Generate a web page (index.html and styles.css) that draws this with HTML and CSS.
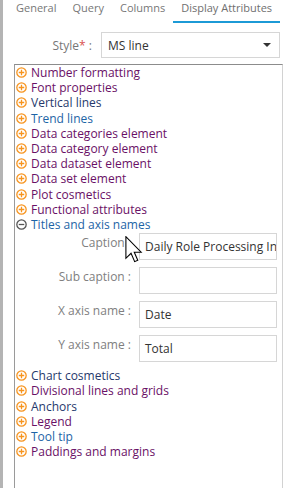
FILE: index.html
```html
<!DOCTYPE html>
<html lang="en">
<head>
    <meta charset="UTF-8">
    <meta name="viewport" content="width=device-width, initial-scale=1.0">
    <title>Display Attributes</title>
    <link rel="stylesheet" href="styles.css">
</head>
<body>
    <div class="page">
        <div class="tabs">
            <span class="tab">General</span>
            <span class="tab">Query</span>
            <span class="tab">Columns</span>
            <span class="tab active">Display Attributes</span>
        </div>

        <div class="style-row">
            <label class="style-label">Style<span class="req">*</span> :</label>
            <div class="select">
                <span>MS line</span>
                <span class="caret"></span>
            </div>
        </div>

        <div class="panel">
            <ul class="tree">
                <li class="visited"><svg class="tog" viewBox="0 0 12 12"><circle cx="6" cy="6" r="5.1"/><path d="M3 6h6M6 3v6"/></svg>Number formatting</li>
                <li class="visited"><svg class="tog" viewBox="0 0 12 12"><circle cx="6" cy="6" r="5.1"/><path d="M3 6h6M6 3v6"/></svg>Font properties</li>
                <li class="navy"><svg class="tog" viewBox="0 0 12 12"><circle cx="6" cy="6" r="5.1"/><path d="M3 6h6M6 3v6"/></svg>Vertical lines</li>
                <li class="link"><svg class="tog" viewBox="0 0 12 12"><circle cx="6" cy="6" r="5.1"/><path d="M3 6h6M6 3v6"/></svg>Trend lines</li>
                <li class="visited"><svg class="tog" viewBox="0 0 12 12"><circle cx="6" cy="6" r="5.1"/><path d="M3 6h6M6 3v6"/></svg>Data categories element</li>
                <li class="visited"><svg class="tog" viewBox="0 0 12 12"><circle cx="6" cy="6" r="5.1"/><path d="M3 6h6M6 3v6"/></svg>Data category element</li>
                <li class="visited"><svg class="tog" viewBox="0 0 12 12"><circle cx="6" cy="6" r="5.1"/><path d="M3 6h6M6 3v6"/></svg>Data dataset element</li>
                <li class="visited"><svg class="tog" viewBox="0 0 12 12"><circle cx="6" cy="6" r="5.1"/><path d="M3 6h6M6 3v6"/></svg>Data set element</li>
                <li class="visited"><svg class="tog" viewBox="0 0 12 12"><circle cx="6" cy="6" r="5.1"/><path d="M3 6h6M6 3v6"/></svg>Plot cosmetics</li>
                <li class="visited"><svg class="tog" viewBox="0 0 12 12"><circle cx="6" cy="6" r="5.1"/><path d="M3 6h6M6 3v6"/></svg>Functional attributes</li>
                <li class="link open"><svg class="tog" viewBox="0 0 12 12"><circle cx="6" cy="6" r="5.1"/><path d="M3 6h6"/></svg>Titles and axis names</li>
            </ul>

            <div class="form">
                <label class="field-label">Caption :</label>
                <div class="field">Daily Role Processing Information</div>
                <label class="field-label">Sub caption :</label>
                <div class="field"></div>
                <label class="field-label">X axis name :</label>
                <div class="field">Date</div>
                <label class="field-label">Y axis name :</label>
                <div class="field">Total</div>
            </div>

            <ul class="tree lower">
                <li class="navy"><svg class="tog" viewBox="0 0 12 12"><circle cx="6" cy="6" r="5.1"/><path d="M3 6h6M6 3v6"/></svg>Chart cosmetics</li>
                <li class="visited"><svg class="tog" viewBox="0 0 12 12"><circle cx="6" cy="6" r="5.1"/><path d="M3 6h6M6 3v6"/></svg>Divisional lines and grids</li>
                <li class="navy"><svg class="tog" viewBox="0 0 12 12"><circle cx="6" cy="6" r="5.1"/><path d="M3 6h6M6 3v6"/></svg>Anchors</li>
                <li class="visited"><svg class="tog" viewBox="0 0 12 12"><circle cx="6" cy="6" r="5.1"/><path d="M3 6h6M6 3v6"/></svg>Legend</li>
                <li class="link"><svg class="tog" viewBox="0 0 12 12"><circle cx="6" cy="6" r="5.1"/><path d="M3 6h6M6 3v6"/></svg>Tool tip</li>
                <li class="visited"><svg class="tog" viewBox="0 0 12 12"><circle cx="6" cy="6" r="5.1"/><path d="M3 6h6M6 3v6"/></svg>Paddings and margins</li>
            </ul>
        </div>

        <!-- mouse pointer over the caption field -->
        <svg class="cursor" viewBox="0 0 13 20">
            <path d="M0.5 0.5 L0.5 16.5 L4.3 12.8 L7 19 L9.3 18 L6.7 12 L11.8 12 Z"/>
        </svg>
    </div>
</body>
</html>
```

FILE: styles.css
```css
body {
    margin: 0;
    font-family: "Open Sans", "Liberation Sans", sans-serif;
    background: #fff;
}

.page {
    position: relative;
    height: 488px;
    border-left: 3px solid #b4b4b4;
    overflow: hidden;
}

.tabs {
    display: flex;
    padding-left: 5px;
    height: 23px;
}

.tab {
    padding: 0 8px;
    height: 21px;
    font-size: 11px;
    line-height: 15px;
    color: #777;
}

.tab.active {
    color: #6f6f6f;
    border-bottom: 2px solid #1c9ad6;
}

.style-row {
    display: flex;
    align-items: center;
    margin-top: 9px;
}

.style-label {
    width: 89px;
    text-align: right;
    font-size: 12px;
    color: #777;
}

.req {
    color: #d9534f;
}

.select {
    display: flex;
    align-items: center;
    justify-content: space-between;
    box-sizing: border-box;
    width: 179px;
    height: 26px;
    margin-left: 9px;
    padding: 0 8px 0 6px;
    border: 1px solid #d6d6d6;
    font-size: 12px;
    color: #333;
}

.caret {
    width: 0;
    height: 0;
    border-left: 4px solid transparent;
    border-right: 4px solid transparent;
    border-top: 4px solid #333;
}

.panel {
    width: 267px;
    height: 440px;
    margin: 6px 0 0 11px;
    border-top: 1px solid #8c8c8c;
    border-left: 1px solid #9a9a9a;
    border-right: 1px solid #d2d2d2;
}

.tree {
    list-style: none;
    margin: 0;
    padding: 0;
}

.tree li {
    display: flex;
    align-items: center;
    height: 15.2px;
    font-size: 12px;
    line-height: 15px;
    white-space: nowrap;
}

.tree.lower {
    margin-top: 6px;
}

.tog {
    width: 11px;
    height: 11px;
    margin: 0 4px 0 1px;
    flex: none;
    fill: #fff;
    stroke: #f7941e;
    stroke-width: 1.4;
}

.open .tog {
    stroke: #555;
}

.visited {
    color: #6a1066;
}

.link {
    color: #1d64a6;
}

.navy {
    color: #26396c;
}

.form {
    display: grid;
    grid-template-columns: 116px 138px;
    column-gap: 8px;
    row-gap: 7px;
    align-items: start;
    margin-top: 1px;
}

.field-label {
    padding-top: 1px;
    font-size: 12px;
    line-height: 18px;
    text-align: right;
    color: #808080;
}

.field {
    box-sizing: border-box;
    height: 27px;
    padding: 0 5px;
    border: 1px solid #d6d6d6;
    font-size: 12px;
    line-height: 25px;
    color: #333;
    white-space: nowrap;
    overflow: hidden;
}

.cursor {
    position: absolute;
    left: 122px;
    top: 236px;
    width: 18px;
    height: 27px;
    fill: #fff;
    stroke: #000;
    stroke-width: 0.8;
    stroke-linejoin: miter;
}
```
